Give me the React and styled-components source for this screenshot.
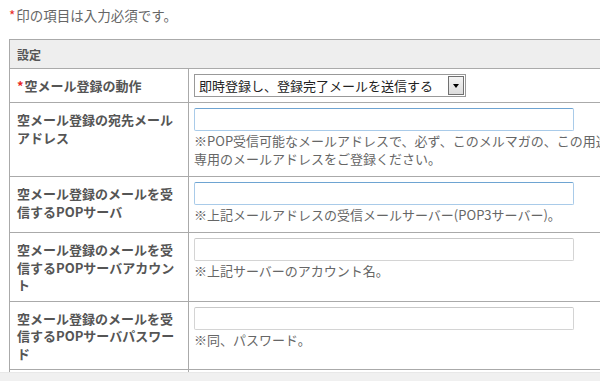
import React from 'react';
import styled, { createGlobalStyle } from 'styled-components';

const GlobalStyle = createGlobalStyle`
  html, body {
    margin: 0;
    padding: 0;
    background: #fff;
    overflow: hidden;
  }
  body {
    font-family: "Noto Sans CJK JP", "Noto Sans", sans-serif;
    color: #666;
  }
`;

const Page = styled.div`
  padding: 5px 0 0 9px;
  width: 640px;
`;

const Notice = styled.p`
  margin: 0 0 14px;
  font-size: 13.5px;
  line-height: 20px;
  color: #666;
`;

const Req = styled.span`
  color: #e8281e;
  margin-right: 1px;
`;

const Table = styled.table`
  border-collapse: collapse;
  table-layout: fixed;
  width: 618px;
  border: 1px solid #aaa;
`;

const HeadCell = styled.th`
  background: #eee;
  text-align: left;
  font-size: 12px;
  font-weight: 700;
  color: #555;
  height: 28px;
  padding: 0 7px;
  border: 1px solid #aaa;
`;

const Label = styled.th`
  width: 164px;
  text-align: left;
  vertical-align: top;
  font-size: 13px;
  font-weight: 700;
  line-height: 17.5px;
  color: #555;
  padding: 8px 7px 7px;
  border: 1px solid #aaa;
`;

const Value = styled.td`
  vertical-align: top;
  padding: 5px 7px 5px 5px;
  border: 1px solid #aaa;
`;

const Select = styled.div`
  display: flex;
  align-items: stretch;
  width: 272px;
  height: 23px;
  box-sizing: border-box;
  border: 1px solid #999;
  background: #fff;
`;

const SelectText = styled.span`
  flex: 1;
  font-size: 13px;
  line-height: 21px;
  padding-left: 4px;
  color: #222;
  white-space: nowrap;
  overflow: hidden;
`;

const SelectButton = styled.span`
  width: 16px;
  margin: 1px;
  box-sizing: border-box;
  border: 1px solid #707070;
  background: linear-gradient(#f4f4f4, #dcdcdc);
  display: flex;
  align-items: center;
  justify-content: center;
`;

const Arrow = styled.span`
  width: 0;
  height: 0;
  border-left: 3.5px solid transparent;
  border-right: 3.5px solid transparent;
  border-top: 4px solid #000;
`;

const Input = styled.input`
  display: block;
  width: 380px;
  height: 23px;
  box-sizing: border-box;
  margin: 0;
  padding: 0 4px;
  border: 1px solid ${(props) => (props.active ? '#a9cbe9' : '#d4d4d4')};
  border-top-color: ${(props) => (props.active ? '#6ea4d2' : '#c8c8c8')};
  border-radius: 2px;
  background: #fff;
  font-family: inherit;
  font-size: 13px;
  outline: none;
`;

const Note = styled.div`
  margin: 1px 0 3px;
  font-size: 13px;
  line-height: 18px;
  color: #666;
`;

const ScrollBar = styled.div`
  position: fixed;
  left: 0;
  right: 0;
  bottom: 0;
  height: 8px;
  background: #f0f0f0;
  border-top: 1px solid #e8e8e8;
`;

const rows = [
  {
    label: '空メール登録の宛先メールアドレス',
    active: true,
    note: '※POP受信可能なメールアドレスで、必ず、このメルマガの、この用途専用のメールアドレスをご登録ください。',
  },
  {
    label: '空メール登録のメールを受信するPOPサーバ',
    active: true,
    note: '※上記メールアドレスの受信メールサーバー(POP3サーバー)。',
  },
  {
    label: '空メール登録のメールを受信するPOPサーバアカウント',
    note: '※上記サーバーのアカウント名。',
  },
  {
    label: '空メール登録のメールを受信するPOPサーバパスワード',
    note: '※同、パスワード。',
  },
];

const Dropdown = ({ text }) => (
  <Select>
    <SelectText>{text}</SelectText>
    <SelectButton><Arrow /></SelectButton>
  </Select>
);

export default function App() {
  return (
    <Page>
      <GlobalStyle />
      <Notice><Req>*</Req>印の項目は入力必須です。</Notice>
      <Table>
        <colgroup>
          <col style={{ width: 179 }} />
          <col />
        </colgroup>
        <tbody>
          <tr>
            <HeadCell colSpan={2}>設定</HeadCell>
          </tr>
          <tr>
            <Label><Req>*</Req>空メール登録の動作</Label>
            <Value>
              <Dropdown text="即時登録し、登録完了メールを送信する" />
            </Value>
          </tr>
          {rows.map((row) => (
            <tr key={row.label}>
              <Label>{row.label}</Label>
              <Value>
                <Input active={row.active} />
                <Note>{row.note}</Note>
              </Value>
            </tr>
          ))}
          <tr>
            <Label>空メール登録の確認メール送信</Label>
            <Value>
              <Dropdown text="送信する" />
            </Value>
          </tr>
        </tbody>
      </Table>
      <ScrollBar />
    </Page>
  );
}
